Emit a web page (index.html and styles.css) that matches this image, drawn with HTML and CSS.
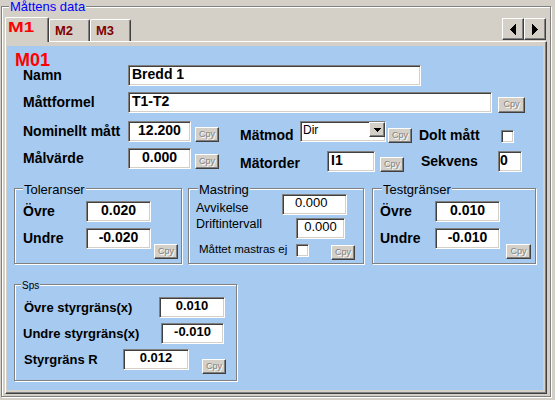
FILE: index.html
```html
<!DOCTYPE html>
<html lang="sv">
<head>
    <meta charset="UTF-8">
    <title>Måttens data</title>
    <link rel="stylesheet" href="styles.css">
</head>
<body>
    <div class="frame">
        <span class="frame-title">Måttens data</span>

        <div class="tabs">
            <div class="tab active"><span>M1</span></div>
            <div class="tab">M2</div>
            <div class="tab">M3</div>
            <div class="scroll">
                <div class="btn3d arrow">
                    <svg width="6" height="11" viewBox="0 0 6 11"><polygon points="0,5.5 6,0 6,11"/></svg>
                </div>
                <div class="btn3d arrow">
                    <svg width="6" height="11" viewBox="0 0 6 11"><polygon points="6,5.5 0,0 0,11"/></svg>
                </div>
            </div>
        </div>

        <div class="page">
            <div class="blue">
                <div class="head">M01</div>

                <div class="form">
                    <div class="row">
                        <span class="lbl w-main">Namn</span>
                        <div class="field w-namn">Bredd 1</div>
                    </div>
                    <div class="row mt6">
                        <span class="lbl w-main">Måttformel</span>
                        <div class="field w-formel">T1-T2</div>
                        <div class="cpy wide" style="margin: 5px 0 0 6px">Cpy</div>
                    </div>
                    <div class="row mt8">
                        <span class="lbl w-main">Nominellt mått</span>
                        <div class="field num w-63">12.200</div>
                        <div class="cpy" style="margin: 6px 0 0 4px">Cpy</div>
                        <span class="lbl" style="margin: 4px 0 0 21px; width: 60px">Mätmod</span>
                        <div class="field combo">
                            Dir
                            <div class="btn3d drop">
                                <svg width="7" height="4" viewBox="0 0 7 4"><polygon points="0,0 7,0 3.5,4"/></svg>
                            </div>
                        </div>
                        <div class="cpy" style="margin: 7px 0 0 2px">Cpy</div>
                        <span class="lbl" style="margin: 4px 0 0 7px; width: 82px">Dolt mått</span>
                        <div class="check" style="margin-top: 9px"></div>
                    </div>
                    <div class="row mt6">
                        <span class="lbl w-main">Målvärde</span>
                        <div class="field num w-63">0.000</div>
                        <div class="cpy" style="margin: 6px 0 0 4px">Cpy</div>
                        <span class="lbl" style="margin: 5px 0 0 21px; width: 87px">Mätorder</span>
                        <div class="field" style="margin-top: 3px; width: 48px">I1</div>
                        <div class="cpy" style="margin: 9px 0 0 5px">Cpy</div>
                        <span class="lbl" style="margin: 3px 0 0 17px; width: 77px">Sekvens</span>
                        <div class="field tight" style="margin-top: 3px; width: 24px">0</div>
                    </div>
                </div>

                <div class="groups">
                    <div class="group g-tol">
                        <span class="group-title">Toleranser</span>
                        <div class="row">
                            <span class="lbl" style="width: 63px">Övre</span>
                            <div class="field num w-65">0.020</div>
                        </div>
                        <div class="row mt6">
                            <span class="lbl" style="width: 63px">Undre</span>
                            <div class="field num w-65">-0.020</div>
                            <div class="cpy" style="margin: 16px 0 0 3px">Cpy</div>
                        </div>
                    </div>

                    <div class="group g-mas">
                        <span class="group-title">Mastring</span>
                        <div class="row">
                            <span class="small" style="margin-top: 7px; width: 86px">Avvikelse</span>
                            <div class="field light w-65" style="padding-left: 12px">0.000</div>
                        </div>
                        <div class="row mt3">
                            <span class="small" style="margin-top: -1px; width: 100px">Driftintervall</span>
                            <div class="field light num" style="width: 49px">0.000</div>
                        </div>
                        <div class="row mt5">
                            <span class="small tiny" style="margin: -2px 0 0 3px; width: 97px">Måttet mastras ej</span>
                            <div class="check"></div>
                            <div class="cpy" style="margin: 1px 0 0 22px">Cpy</div>
                        </div>
                    </div>

                    <div class="group g-test">
                        <span class="group-title">Testgränser</span>
                        <div class="row">
                            <span class="lbl" style="width: 55px">Övre</span>
                            <div class="field num w-65">0.010</div>
                        </div>
                        <div class="row mt6">
                            <span class="lbl" style="width: 55px">Undre</span>
                            <div class="field num w-65">-0.010</div>
                            <div class="cpy" style="margin: 16px 0 0 6px; width: 25px">Cpy</div>
                        </div>
                    </div>
                </div>

                <div class="group g-sps">
                    <span class="group-title sps-title">Sps</span>
                    <div class="row">
                        <span class="lbl sm" style="width: 135px">Övre styrgräns(x)</span>
                        <div class="field num sm" style="width: 66px">0.010</div>
                    </div>
                    <div class="row mt5">
                        <span class="lbl sm" style="margin-left: -1px; width: 138px">Undre styrgräns(x)</span>
                        <div class="field num sm" style="width: 63px">-0.010</div>
                    </div>
                    <div class="row mt5">
                        <span class="lbl sm" style="width: 99px">Styrgräns R</span>
                        <div class="field num sm" style="width: 66px">0.012</div>
                        <div class="cpy" style="margin: 10px 0 0 13px">Cpy</div>
                    </div>
                </div>
            </div>
        </div>
    </div>
</body>
</html>
```

FILE: styles.css
```css
body {
    margin: 0;
    width: 555px;
    height: 400px;
    overflow: hidden;
    background: #d4d0c8;
    font-family: "Liberation Sans", Arial, sans-serif;
    color: #000;
}
.frame {
    position: relative;
    box-sizing: border-box;
    width: 550px;
    height: 391px;
    margin: 6px 0 0 1px;
    padding: 10px 3px 2px 3px;
    border: 1px solid #808080;
    box-shadow: inset 1px 1px #fff, 1px 1px #fff;
}
.frame-title {
    position: absolute;
    top: -8px;
    left: 7px;
    padding: 0 1px;
    background: #d4d0c8;
    color: #0000ff;
    font-size: 13px;
    line-height: 15px;
}

/* tabs */
.tabs {
    display: flex;
    align-items: flex-start;
    height: 24px;
}
.tab {
    box-sizing: border-box;
    width: 41px;
    height: 22px;
    margin-top: 2px;
    padding: 3px 0 0 5px;
    border: 1px solid #fff;
    border-right-color: #404040;
    border-bottom: none;
    border-radius: 2px 2px 0 0;
    box-shadow: inset -1px 0 #808080;
    color: #800000;
    font-size: 13px;
    font-weight: bold;
    line-height: 15px;
}
.tab.active {
    position: relative;
    z-index: 1;
    width: 44px;
    height: 25px;
    margin-top: 0;
    padding: 2px 0 0 2px;
    background: #d4d0c8;
    color: #ff0000;
    font-size: 14px;
}
.tab.active span {
    display: inline-block;
    transform: scaleX(1.35);
    transform-origin: left;
}
.scroll {
    display: flex;
    margin: 1px 1px 0 auto;
}
.btn3d {
    box-sizing: border-box;
    background: #d4d0c8;
    border: 1px solid;
    border-color: #fff #404040 #404040 #fff;
    box-shadow: inset -1px -1px #808080;
}
.arrow {
    width: 22px;
    height: 22px;
    display: flex;
    align-items: center;
    justify-content: center;
}
.arrow svg, .drop svg {
    display: block;
    shape-rendering: crispEdges;
}

/* tab page */
.page {
    box-sizing: border-box;
    height: 353px;
    padding: 4px 3px 3px 1px;
    border: 1px solid;
    border-color: #fff #404040 #404040 #fff;
    box-shadow: inset -1px -1px #808080;
}
.blue {
    box-sizing: border-box;
    height: 100%;
    padding: 7px 0 0 7px;
    background: #a6caf0;
}
.head {
    height: 12px;
    margin-left: 1px;
    color: #ff0000;
    font-size: 18px;
    font-weight: bold;
    line-height: 14px;
}
.form {
    padding-left: 9px;
}
.row {
    display: flex;
    align-items: flex-start;
    height: 21px;
}
.row > * {
    flex-shrink: 0;
}
.mt3 { margin-top: 3px; }
.mt5 { margin-top: 5px; }
.mt6 { margin-top: 6px; }
.mt8 { margin-top: 8px; }

.lbl {
    padding-top: 3px;
    font-size: 14px;
    font-weight: bold;
    line-height: 15px;
    white-space: nowrap;
}
.lbl.sm {
    font-size: 13px;
}
.w-main { width: 105px; }
.w-namn { width: 293px; }
.w-formel { width: 364px; }
.w-63 { width: 63px; }
.w-65 { width: 65px; }

.small {
    font-size: 12.5px;
    line-height: 14px;
    white-space: nowrap;
}
.small.tiny {
    font-size: 11.5px;
}

/* sunken controls */
.field, .check {
    box-sizing: border-box;
    background: #fff;
    border: 1px solid;
    border-color: #808080 #fff #fff #808080;
    box-shadow: inset 1px 1px #404040, inset -1px -1px #d4d0c8;
}
.field {
    height: 21px;
    padding: 0 3px;
    overflow: hidden;
    white-space: nowrap;
    font-size: 14px;
    font-weight: bold;
    line-height: 16px;
}
.field.num {
    padding: 0;
    text-align: center;
}
.field.tight {
    padding-left: 1px;
}
.field.sm {
    font-size: 13px;
    line-height: 15px;
}
.field.light {
    font-size: 13px;
    font-weight: normal;
    line-height: 15px;
}
.check {
    width: 13px;
    height: 13px;
}
.combo {
    display: flex;
    align-items: flex-start;
    width: 86px;
    padding: 0 0 0 2px;
    font-size: 12px;
    font-weight: normal;
    line-height: 16px;
}
.drop {
    width: 16px;
    height: 15px;
    margin-left: auto;
    display: flex;
    align-items: center;
    justify-content: center;
}

.cpy {
    box-sizing: border-box;
    width: 24px;
    height: 15px;
    background: #d4d0c8;
    border: 1px solid;
    border-color: #fff #404040 #404040 #fff;
    box-shadow: inset -1px -1px #808080;
    color: #808080;
    text-shadow: 1px 1px #fff;
    font-size: 9px;
    line-height: 12px;
    text-align: center;
}
.cpy.wide {
    width: 27px;
    height: 16px;
    line-height: 13px;
}

/* group boxes */
.groups {
    display: flex;
    height: 76px;
    margin-top: 19px;
}
.group {
    position: relative;
    box-sizing: border-box;
    height: 76px;
    border: 1px solid #808080;
    box-shadow: inset 1px 1px #fff, 1px 1px #fff;
}
.group-title {
    position: absolute;
    top: -7px;
    left: 8px;
    padding: 0 1px;
    background: #a6caf0;
    font-size: 13px;
    line-height: 15px;
    white-space: nowrap;
}
.g-tol {
    width: 168px;
    padding: 12px 0 0 8px;
}
.g-mas {
    width: 176px;
    margin-left: 6px;
    padding: 5px 0 0 7px;
}
.g-mas .group-title,
.g-test .group-title {
    left: 9px;
}
.g-test {
    width: 164px;
    margin-left: 8px;
    padding: 12px 0 0 7px;
}
.g-sps {
    width: 223px;
    height: 97px;
    margin-top: 20px;
    padding: 12px 0 0 9px;
}
.sps-title {
    top: -5px;
    left: 6px;
    font-size: 10px;
    line-height: 12px;
}
```
